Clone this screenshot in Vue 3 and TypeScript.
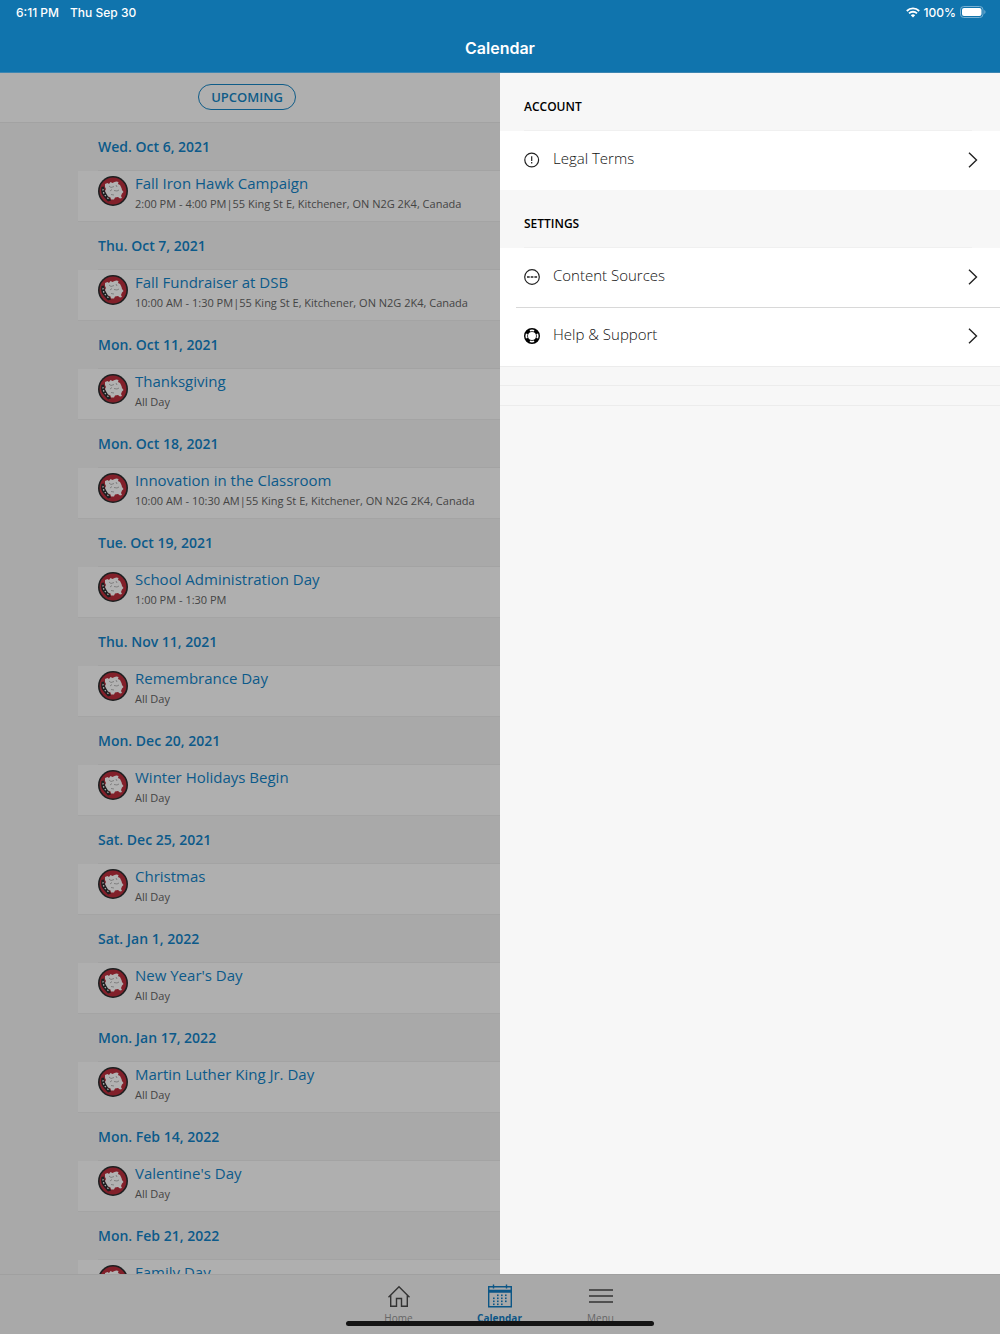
<script setup lang="ts">
interface CalendarEvent {
  date: string
  title: string
  detail: string
}

interface SettingsItem {
  label: string
  icon: 'alert' | 'dots' | 'lifebuoy'
}

interface SettingsGroup {
  heading: string
  items: SettingsItem[]
}

const events: CalendarEvent[] = [
  { date: 'Wed. Oct 6, 2021', title: 'Fall Iron Hawk Campaign', detail: '2:00 PM - 4:00 PM|55 King St E, Kitchener, ON N2G 2K4, Canada' },
  { date: 'Thu. Oct 7, 2021', title: 'Fall Fundraiser at DSB', detail: '10:00 AM - 1:30 PM|55 King St E, Kitchener, ON N2G 2K4, Canada' },
  { date: 'Mon. Oct 11, 2021', title: 'Thanksgiving', detail: 'All Day' },
  { date: 'Mon. Oct 18, 2021', title: 'Innovation in the Classroom', detail: '10:00 AM - 10:30 AM|55 King St E, Kitchener, ON N2G 2K4, Canada' },
  { date: 'Tue. Oct 19, 2021', title: 'School Administration Day', detail: '1:00 PM - 1:30 PM' },
  { date: 'Thu. Nov 11, 2021', title: 'Remembrance Day', detail: 'All Day' },
  { date: 'Mon. Dec 20, 2021', title: 'Winter Holidays Begin', detail: 'All Day' },
  { date: 'Sat. Dec 25, 2021', title: 'Christmas', detail: 'All Day' },
  { date: 'Sat. Jan 1, 2022', title: "New Year's Day", detail: 'All Day' },
  { date: 'Mon. Jan 17, 2022', title: 'Martin Luther King Jr. Day', detail: 'All Day' },
  { date: 'Mon. Feb 14, 2022', title: "Valentine's Day", detail: 'All Day' },
  { date: 'Mon. Feb 21, 2022', title: 'Family Day', detail: 'All Day' },
]

const groups: SettingsGroup[] = [
  { heading: 'ACCOUNT', items: [{ label: 'Legal Terms', icon: 'alert' }] },
  {
    heading: 'SETTINGS',
    items: [
      { label: 'Content Sources', icon: 'dots' },
      { label: 'Help & Support', icon: 'lifebuoy' },
    ],
  },
]

const dotRows: number[][] = [
  [9, 13, 17],
  [5, 9, 13, 17],
  [5, 9, 13, 17],
  [5, 9, 13],
]
</script>

<template>
  <div class="app">
    <svg class="defs" aria-hidden="true">
      <symbol id="mascot" viewBox="0 0 30 30">
        <circle cx="15" cy="15" r="15" fill="#1d1f20" />
        <circle cx="15" cy="15" r="13.400" fill="#82202a" />
        <path d="M3.500 11q-1.500 6 2.500 10l4 4.500 3-1-3-5-3-4-1-5z" fill="#1d1f20" />
        <path
          d="M7 8l2.500-1 1.500 1 1.500-2 2 1 2-1 2-.5 2 .5-.5 2 2 1 1.500 3 .5 2 1.500 2-1.500 1.500-1 2.500 1 2-2 .5-2-1.500-3 .5-1 2-3 0-.5-2-2.500-1-1.500-2.500-1.500-3 1-2-1-2z"
          fill="#b2b2b2"
        />
        <path d="M11 10l2 1.500 3-1M18 9l1 2M12 15l2-1.500M16 14.500l3 .5 2-1M13 18.500l3 .5" fill="none" stroke="#6a6a6a" stroke-width="0.700" />
        <path d="M4.500 13.500l1 .5M5 17l1.300-.3M6.800 20l1-.8M9.500 22.700l.8-1" stroke="#b2b2b2" stroke-width="1.400" />
      </symbol>
    </svg>

    <header class="header">
      <div class="status">
        <span>6:11 PM</span>
        <span>Thu Sep 30</span>
        <span class="status-right">
          <svg width="14" height="11" viewBox="0 0 14 11" aria-hidden="true">
            <g fill="none" stroke="#fff" stroke-width="1.800">
              <path d="M.8 4a8.800 8.800 0 0 1 12.400 0" />
              <path d="M3 6.400a5.700 5.700 0 0 1 8 0" />
            </g>
            <path d="M4.800 8.300a3.200 3.200 0 0 1 4.400 0L7 10.600z" fill="#fff" />
          </svg>
          <span>100%</span>
          <svg width="26" height="12" viewBox="0 0 26 12" aria-hidden="true">
            <rect x=".5" y=".5" width="22.500" height="11" rx="3.300" fill="none" stroke="#78b0d2" />
            <rect x="2" y="2" width="19.500" height="8" rx="2" fill="#fff" />
            <path d="M24.300 4v4q1.200-.7 1.200-2t-1.200-2z" fill="#78b0d2" />
          </svg>
        </span>
      </div>
      <h1>Calendar</h1>
    </header>

    <main class="main">
      <section class="calendar" aria-label="Upcoming events">
        <div class="toolbar"><button type="button" class="pill">UPCOMING</button></div>
        <ul class="events">
          <li v-for="event in events" :key="event.date">
            <h2>{{ event.date }}</h2>
            <a href="#" class="event">
              <svg width="30" height="30" aria-hidden="true"><use href="#mascot" /></svg>
              <span class="event-text">
                <span class="event-title">{{ event.title }}</span>
                <span class="event-detail">{{ event.detail }}</span>
              </span>
            </a>
          </li>
        </ul>
      </section>

      <aside class="drawer" aria-label="Menu">
        <section v-for="group in groups" :key="group.heading" class="group">
          <h2>{{ group.heading }}</h2>
          <ul class="rows">
            <li v-for="item in group.items" :key="item.label">
              <a href="#" class="row">
                <svg width="16" height="16" viewBox="0 0 16 16" aria-hidden="true">
                  <template v-if="item.icon === 'alert'">
                    <circle cx="7.700" cy="8" r="6.900" fill="none" stroke="#222" stroke-width="1.200" />
                    <path d="M7.700 4.300v4.700M7.700 10v1.500" stroke="#222" stroke-width="1.200" />
                  </template>
                  <template v-else-if="item.icon === 'dots'">
                    <circle cx="8" cy="8" r="7.300" fill="none" stroke="#222" stroke-width="1.200" />
                    <path d="M3 8h2.700M6.700 8h2.700M10.400 8h2.700" stroke="#222" stroke-width="1.500" />
                  </template>
                  <template v-else>
                    <circle cx="8" cy="8" r="6" fill="none" stroke="#000" stroke-width="4" />
                    <path d="M5.600 1.900a6.500 6.500 0 0 1 4.800 0L9.900 3.600a5 5 0 0 0-3.800 0zM5.600 14.100a6.500 6.500 0 0 0 4.800 0L9.900 12.400a5 5 0 0 1-3.800 0zM1.900 5.600a6.500 6.500 0 0 0 0 4.800L3.600 9.900a5 5 0 0 1 0-3.800zM14.100 5.600a6.500 6.500 0 0 1 0 4.800L12.400 9.900a5 5 0 0 0 0-3.800z" fill="#fff" />
                  </template>
                </svg>
                <span class="row-label">{{ item.label }}</span>
                <svg width="10" height="16" viewBox="0 0 10 16" aria-hidden="true">
                  <path d="M1 .8L8.500 8 1 15.200" fill="none" stroke="#222" stroke-width="1.400" />
                </svg>
              </a>
            </li>
          </ul>
        </section>
        <div class="spacer"></div>
        <div class="spacer"></div>
      </aside>
    </main>

    <nav class="tabs">
      <a href="#" class="tab">
        <svg width="24" height="24" viewBox="0 0 24 24" fill="none" stroke="#333" stroke-width="1.400" aria-hidden="true">
          <path d="M1.500 13.200L12 2.800l10.500 10.400M3.700 11.500v10.700h5.800v-7.700h5v7.700h5.800V11.500" />
        </svg>
        <span>Home</span>
      </a>
      <a href="#" class="tab active" aria-current="page">
        <svg width="24" height="24" viewBox="0 0 24 24" fill="none" stroke="#0c5686" stroke-width="1.400" aria-hidden="true">
          <path d="M.7 2.800h22.600v19.900H.7zM.7 6.500h22.600M.7 8h22.600M5.500.5v4M18.500.5v4" />
          <template v-for="(row, y) in dotRows" :key="y">
            <rect v-for="x in row" :key="x" :x="x" :y="10.500 + y * 3" width="1.600" height="1.600" fill="#0c5686" stroke="none" />
          </template>
        </svg>
        <span>Calendar</span>
      </a>
      <a href="#" class="tab">
        <svg width="24" height="24" viewBox="0 0 24 24" fill="none" stroke="#333" stroke-width="1.500" aria-hidden="true">
          <path d="M0 6h24M0 12h24M0 18h24" />
        </svg>
        <span>Menu</span>
      </a>
      <div class="home-indicator"></div>
    </nav>
  </div>
</template>

<style>
body {
  margin: 0;
}
</style>

<style scoped>
* {
  box-sizing: border-box;
}
.app {
  display: flex;
  flex-direction: column;
  height: 100vh;
  font-family: "Open Sans", "Noto Sans", sans-serif;
  background: #a9a9a9;
}
.defs {
  position: absolute;
  width: 0;
  height: 0;
}
h1,
h2,
ul {
  margin: 0;
  padding: 0;
}
ul {
  list-style: none;
}
a {
  color: inherit;
  text-decoration: none;
}
svg {
  display: block;
  flex: none;
}
.header {
  flex: none;
  height: 73px;
  border-bottom: 1px solid #3d86b2;
  background: #1074ad;
  color: #fff;
  font-family: Inter, sans-serif;
}
.status {
  display: flex;
  align-items: center;
  gap: 11px;
  height: 24px;
  padding: 0 14px 0 16px;
  font-size: 12px;
  font-weight: 500;
}
.status-right {
  display: flex;
  align-items: center;
  gap: 4px;
  margin-left: auto;
}
h1 {
  font-size: 16px;
  font-weight: 600;
  line-height: 48px;
  text-align: center;
}
.main {
  display: flex;
  flex: 1;
  min-height: 0;
}
.calendar,
.drawer {
  flex: 1 1 50%;
  min-width: 0;
  overflow: hidden;
}
.toolbar {
  display: flex;
  align-items: center;
  justify-content: center;
  height: 50px;
  padding: 0 6px 2px 0;
  border-bottom: 1px solid #a2a2a2;
  background: #afafaf;
}
.pill {
  height: 26px;
  padding: 0 12px;
  border: 1px solid #0f5c88;
  border-radius: 13px;
  background: none;
  color: #0f5c88;
  font: 600 13px "Open Sans", sans-serif;
}
.events {
  padding-left: 78px;
}
.events h2 {
  height: 48px;
  margin-left: 20px;
  border-bottom: 1px solid #a3a3a3;
  color: #0c5a8a;
  font-size: 14px;
  font-weight: 600;
  line-height: 48px;
}
.event {
  display: flex;
  gap: 7px;
  height: 51px;
  padding: 5px 0 0 20px;
  border-bottom: 1px solid #a4a4a4;
  background: #afafaf;
}
.event-text {
  display: flex;
  flex-direction: column;
  white-space: nowrap;
}
.event-title {
  color: #0c5a8a;
  font-size: 15px;
  line-height: 14px;
}
.event-detail {
  color: #444;
  font-size: 11px;
  line-height: 28px;
}
.drawer {
  background: #f7f7f7;
}
.group h2 {
  height: 58px;
  margin: 0 28px 0 24px;
  border-bottom: 1px solid #f0f0f0;
  font-size: 12px;
  font-weight: 600;
  line-height: 68px;
}
.rows {
  background: #fff;
}
.row {
  display: flex;
  align-items: center;
  gap: 13px;
  height: 59px;
  padding: 0 22px 2px 24px;
  color: #111;
}
.rows li + li {
  margin-left: 16px;
  border-top: 1px solid #d8d8d8;
}
.rows li + li .row {
  height: 58px;
  padding-left: 8px;
}
.row-label {
  flex: 1;
  padding-bottom: 4px;
  font-size: 15px;
  font-weight: 300;
  line-height: 20px;
}
.spacer {
  height: 20px;
  border-top: 1px solid #ececec;
  border-bottom: 1px solid #ececec;
}
.spacer + .spacer {
  border-top: 0;
}
.tabs {
  position: relative;
  display: flex;
  flex: none;
  justify-content: center;
  height: 60px;
  padding: 9px 1px 0 0;
  border-top: 1px solid #a0a0a0;
}
.tab {
  display: flex;
  flex-direction: column;
  align-items: center;
  gap: 3px;
  width: 101px;
  color: #666;
  font-size: 10px;
  line-height: 14px;
}
.active {
  color: #0c5686;
  font-weight: 700;
}
.home-indicator {
  position: absolute;
  bottom: 8px;
  left: 50%;
  width: 308px;
  height: 5px;
  margin-left: -154px;
  border-radius: 3px;
  background: #141414;
}
</style>
